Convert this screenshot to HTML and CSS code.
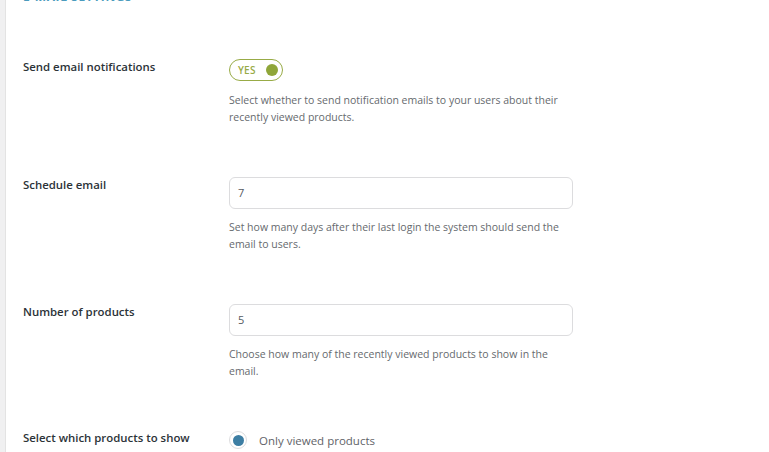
FILE: index.html
```html
<!DOCTYPE html>
<html>
<head>
<meta charset="utf-8">
<link rel="stylesheet" href="styles.css">
</head>
<body>
<div class="page">
  <div class="sidebar"></div>
  <div class="panel">
    <h2 class="section-title">E-MAIL SETTINGS</h2>
    <div class="row row-first">
      <div class="label">Send email notifications</div>
      <div class="field">
        <div class="toggle"><span class="toggle-text">YES</span><span class="knob"></span></div>
        <p class="desc">Select whether to send notification emails to your users about their recently viewed products.</p>
      </div>
    </div>
    <div class="row">
      <div class="label">Schedule email</div>
      <div class="field">
        <div class="input">7</div>
        <p class="desc">Set how many days after their last login the system should send the email to users.</p>
      </div>
    </div>
    <div class="row">
      <div class="label">Number of products</div>
      <div class="field">
        <div class="input">5</div>
        <p class="desc">Choose how many of the recently viewed products to show in the email.</p>
      </div>
    </div>
    <div class="row row-last">
      <div class="label">Select which products to show</div>
      <div class="field">
        <div class="radio-line"><span class="radio"><span class="dot"></span></span><span class="radio-label">Only viewed products</span></div>
      </div>
    </div>
  </div>
</div>
</body>
</html>
```
FILE: styles.css
```css
html, body {
  margin: 0;
  padding: 0;
  background: #ffffff;
  overflow: hidden;
}
body {
  font-family: "Open Sans", "Noto Sans", sans-serif;
  width: 769px;
  height: 452px;
}
.page {
  display: flex;
  height: 452px;
}
.sidebar {
  width: 5px;
  background: #f0f0f1;
  border-right: 1px solid #e3e3e3;
  flex: none;
}
.panel {
  flex: 1;
  padding-left: 17px;
}
.section-title {
  margin: -11px 0 0 0;
  font-size: 12px;
  font-weight: 700;
  letter-spacing: 0.6px;
  color: #4b9bbd;
  line-height: 15px;
}
.row {
  display: grid;
  grid-template-columns: 206px 344px;
  margin-top: 51px;
}
.row-first {
  margin-top: 55px;
}
.row-last {
  margin-top: 50px;
}
.label {
  font-size: 11.4px;
  font-weight: 600;
  color: #2c3338;
  line-height: 16px;
}
.field {
  display: flex;
  flex-direction: column;
}
.toggle {
  height: 20px;
  border: 1px solid #98ab46;
  border-radius: 12px;
  display: flex;
  align-items: center;
  justify-content: space-between;
  padding: 0 4px 0 8px;
  box-sizing: content-box;
  width: 40px;
}
.toggle-text {
  font-size: 10px;
  font-weight: 600;
  color: #98ab46;
  letter-spacing: 0.2px;
}
.knob {
  width: 12px;
  height: 12px;
  border-radius: 50%;
  background: #8fa639;
}
.desc {
  margin: 11px 0 0 0;
  font-size: 10.5px;
  line-height: 17px;
  color: #666a6e;
  width: 340px;
}
.input {
  height: 30px;
  border: 1px solid #dcdcde;
  border-radius: 6px;
  box-sizing: content-box;
  padding: 0 8px;
  font-size: 11px;
  line-height: 30px;
  color: #555a5f;
  width: 326px;
}
.input + .desc {
  margin-top: 10px;
}
.radio-line {
  display: flex;
  align-items: center;
  gap: 12px;
  margin-top: 1px;
}
.radio {
  width: 16px;
  height: 16px;
  border: 1px solid #dcdcde;
  border-radius: 50%;
  display: flex;
  align-items: center;
  justify-content: center;
  background: #fff;
}
.dot {
  width: 11px;
  height: 11px;
  border-radius: 50%;
  background: #3d7ea3;
}
.radio-label {
  font-size: 11.5px;
  color: #5f6368;
}
```
